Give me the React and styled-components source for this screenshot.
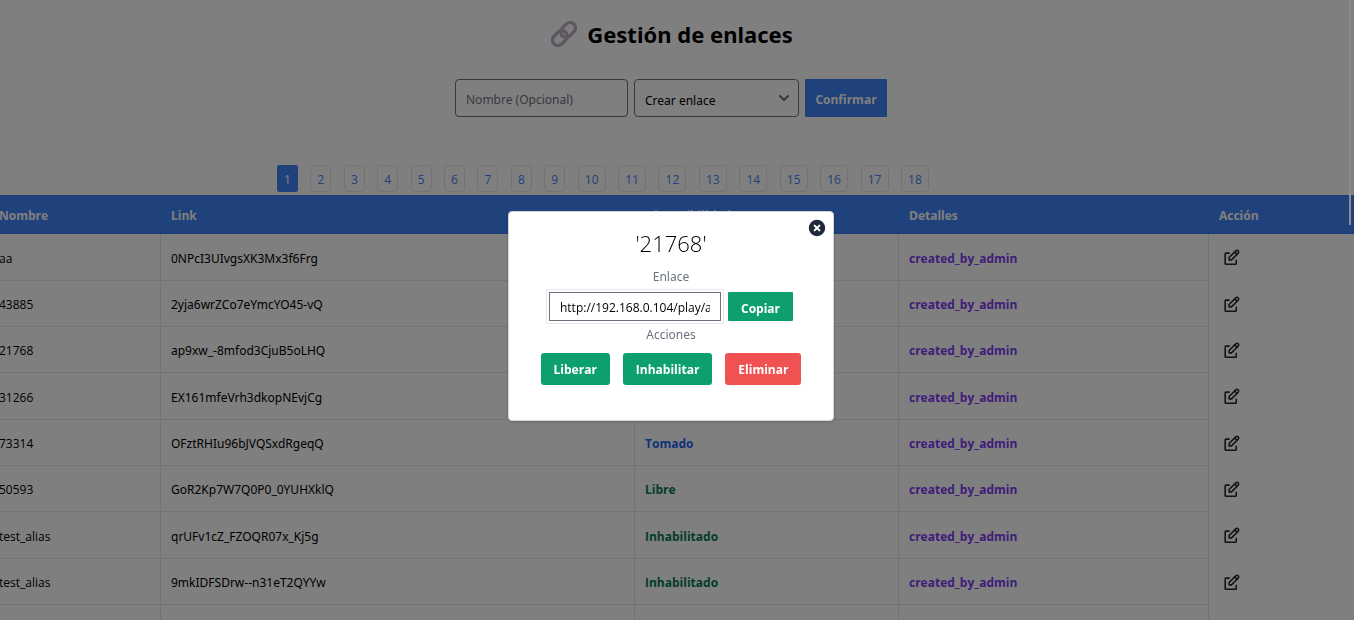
import React, { useState } from "react";
import styled, { createGlobalStyle } from "styled-components";

const GlobalStyle = createGlobalStyle`
  *, *::before, *::after { box-sizing: border-box; }
  body {
    margin: 0;
    background: #fff;
    color: #000;
    font-family: "Open Sans", "Noto Sans", sans-serif;
    font-size: 12px;
    line-height: 20px;
    overflow: hidden;
  }
  button, input, select { font: inherit; margin: 0; }
`;

const Page = styled.div`
  height: 100vh;
  overflow: hidden;
`;

const Header = styled.header`
  display: flex;
  justify-content: center;
  align-items: center;
  gap: 10px;
  padding: 16px 10px 0 0;
`;

const Title = styled.h1`
  margin: 0;
  font-family: "Noto Sans", sans-serif;
  font-size: 22px;
  font-weight: 700;
  line-height: 36px;
`;

const CreateForm = styled.form`
  display: flex;
  justify-content: center;
  gap: 6px;
  padding: 27px 12px 0 0;
`;

const NameInput = styled.input`
  width: 173px;
  height: 38px;
  padding: 2px 10px 0;
  border: 1px solid #6b7280;
  border-radius: 4px;
  background: #fff;
  font-family: "Noto Sans", sans-serif;
  &::placeholder { color: #6b7280; opacity: 1; }
`;

const SelectBox = styled.div`
  position: relative;
  width: 165px;
`;

const Select = styled.select`
  appearance: none;
  width: 100%;
  height: 38px;
  padding: 5px 30px 0 10px;
  border: 1px solid #6b7280;
  border-radius: 4px;
  background: #fff;
  color: #000;
  font-family: "Noto Sans", sans-serif;
`;

const Chevron = styled.svg`
  position: absolute;
  right: 8px;
  top: 12px;
  pointer-events: none;
`;

const Confirm = styled.button`
  width: 82px;
  height: 38px;
  padding: 4px 0 0;
  border: 0;
  border-radius: 1px;
  background: #3f83f8;
  color: #fff;
  font-weight: 700;
`;

const PagerBar = styled.div`
  display: flex;
  justify-content: center;
  padding: 48px 148px 3px 0;
`;

const Pager = styled.nav`
  display: flex;
  justify-content: space-between;
  width: 652px;
`;

const PageButton = styled.button`
  width: ${(p) => (p.$wide ? "28px" : "21px")};
  height: 27px;
  padding: 2px 0 0;
  border: 1px solid ${(p) => (p.$active ? "#3f83f8" : "#e5e7eb")};
  border-radius: ${(p) => (p.$active ? "2px" : "4px")};
  background: ${(p) => (p.$active ? "#3f83f8" : "#fff")};
  color: ${(p) => (p.$active ? "#fff" : "#3f83f8")};
`;

const TableScroll = styled.div`
  overflow: hidden;
  display: flex;
  justify-content: flex-end;
`;

const Table = styled.table`
  flex: none;
  width: calc(100% + 11px);
  table-layout: fixed;
  border-collapse: separate;
  border-spacing: 0;
  text-align: left;
`;

const Col = styled.col`
  width: ${(p) => p.$width};
`;

const HeadCell = styled.th`
  height: 39px;
  padding: 3px 10px 0;
  border-bottom: 1px solid #3b78e6;
  background: #3f83f8;
  color: #fff;
  font-weight: 700;
`;

const Row = styled.tr`
  height: 46px;
  &:nth-child(3n + 1) { height: 47px; }
`;

const tones = { plain: "#000", taken: "#1c64f2", free: "#057a55", detail: "#7e3af2" };

const Cell = styled.td`
  padding: 3px 10px 0;
  border-right: 1px solid #e5e7eb;
  border-bottom: 1px solid #e5e7eb;
  color: ${(p) => tones[p.$tone || "plain"]};
  font-weight: ${(p) => (p.$tone ? 700 : 400)};
`;

const LinkCell = styled(Cell)`
  font-family: "Noto Sans", sans-serif;
`;

const ActionCell = styled.td`
  padding: 0 13px;
`;

const IconButton = styled.button`
  display: block;
  padding: 0;
  border: 0;
  background: none;
  color: #1f2937;
  svg { display: block; }
`;

const ScrollThumb = styled.div`
  position: absolute;
  top: 0;
  right: 3px;
  width: 2px;
  height: 225px;
  background: #8c8c8c;
`;

const Overlay = styled.div`
  position: fixed;
  inset: 0;
  display: flex;
  align-items: center;
  justify-content: center;
  padding: 12px 12px 0 0;
  background: rgba(0, 0, 0, 0.5);
`;

const Dialog = styled.section`
  position: relative;
  width: 326px;
  padding: 13px 20px 35px;
  border: 1px solid #d1d5db;
  border-radius: 4px;
  background: #fff;
  box-shadow: 0 1px 3px rgba(0, 0, 0, 0.2);
  text-align: center;
`;

const CloseButton = styled.button`
  position: absolute;
  top: 7px;
  right: 7px;
  padding: 0;
  border: 0;
  background: none;
  svg { display: block; }
`;

const DialogTitle = styled.h2`
  margin: 0;
  font-size: 22px;
  font-weight: 300;
  line-height: 36px;
`;

const Label = styled.label`
  display: block;
  padding: 6px 0 2px;
  color: #6b7280;
  font-family: "Noto Sans", sans-serif;
`;

const ActionsLabel = styled.div`
  padding-top: 1px;
  color: #6b7280;
  font-family: "Noto Sans", sans-serif;
`;

const LinkRow = styled.div`
  display: flex;
  justify-content: center;
  align-items: center;
  gap: 4px;
  padding-right: 3px;
`;

const InputFrame = styled.div`
  padding: 2px;
  border: 1px solid #e5e7eb;
`;

const LinkInput = styled.input`
  display: block;
  width: 172px;
  height: 29px;
  padding: 2px 10px 0;
  border: 1px solid #6b7280;
  border-radius: 0;
  background: #fff;
  color: #000;
`;

const Actions = styled.div`
  display: flex;
  justify-content: center;
  gap: 13px;
  padding-top: 8px;
`;

const Button = styled.button`
  height: ${(p) => (p.$compact ? "29px" : "32px")};
  padding: ${(p) => (p.$compact ? "4px 13px 0" : "2px 13px 0")};
  border: 0;
  border-radius: ${(p) => (p.$compact ? "1px" : "3px")};
  background: ${(p) => (p.$danger ? "#f05252" : "#0e9f6e")};
  color: #fff;
  font-weight: 700;
`;

const links = [
  ["aa", "0NPcI3UIvgsXK3Mx3f6Frg", "Libre"],
  ["43885", "2yja6wrZCo7eYmcYO45-vQ", "Libre"],
  ["21768", "ap9xw_-8mfod3CjuB5oLHQ", "Tomado"],
  ["31266", "EX161mfeVrh3dkopNEvjCg", "Libre"],
  ["73314", "OFztRHIu96bJVQSxdRgeqQ", "Tomado"],
  ["50593", "GoR2Kp7W7Q0P0_0YUHXklQ", "Libre"],
  ["test_alias", "qrUFv1cZ_FZOQR07x_Kj5g", "Inhabilitado"],
  ["test_alias", "9mkIDFSDrw--n31eT2QYYw", "Inhabilitado"],
  ["", "", ""],
];

function LinkIcon() {
  return (
    <svg width="26" height="26" viewBox="0 0 26 26" fill="none" stroke="#bcaec4" strokeWidth="3.4" aria-hidden="true">
      <g transform="rotate(-45 13 13)">
        <rect x="-1" y="7.6" width="16.4" height="10.8" rx="5.4" />
        <rect x="10.6" y="7.6" width="16.4" height="10.8" rx="5.4" />
      </g>
    </svg>
  );
}

function EditIcon() {
  return (
    <svg
      width="19"
      height="19"
      viewBox="0 0 24 24"
      fill="none"
      stroke="currentColor"
      strokeWidth="2"
      strokeLinecap="round"
      strokeLinejoin="round"
      aria-hidden="true"
    >
      <path d="M9 6.5H5a1 1 0 0 0-1 1V19.500a1 1 0 0 0 1 1h12a1 1 0 0 0 1-1V15.500" />
      <path d="M20.385 6.585a2.1 2.1 0 0 0-2.97-2.97L9 12v3h3l8.385-8.415z" />
      <path d="M16 5l3 3" />
    </svg>
  );
}

export default function App() {
  const [page, setPage] = useState(1);
  const [open, setOpen] = useState(true);
  return (
    <>
      <GlobalStyle />
      <Page>
        <Header>
          <LinkIcon />
          <Title>Gestión de enlaces</Title>
        </Header>
        <CreateForm onSubmit={(e) => e.preventDefault()}>
          <NameInput aria-label="Nombre" placeholder="Nombre (Opcional)" />
          <SelectBox>
            <Select aria-label="Tipo">
              <option>Crear enlace</option>
            </Select>
            <Chevron width="14" height="14" viewBox="0 0 14 14" fill="none" stroke="#6b7280" strokeWidth="2">
              <path d="M3 5l4 4 4-4" strokeLinecap="round" strokeLinejoin="round" />
            </Chevron>
          </SelectBox>
          <Confirm type="submit">Confirmar</Confirm>
        </CreateForm>
        <PagerBar>
          <Pager aria-label="Páginas">
            {Array.from({ length: 18 }, (_, i) => i + 1).map((n) => (
              <PageButton key={n} type="button" $wide={n > 9} $active={n === page} onClick={() => setPage(n)}>
                {n}
              </PageButton>
            ))}
          </Pager>
        </PagerBar>
        <TableScroll>
          <Table>
            <colgroup>
              <Col $width="172px" />
              <Col $width="474px" />
              <Col $width="264px" />
              <Col $width="310px" />
              <Col $width="auto" />
            </colgroup>
            <thead>
              <tr>
                {["Nombre", "Link", "Disponibilidad", "Detalles", "Acción"].map((h) => (
                  <HeadCell key={h} scope="col">{h}</HeadCell>
                ))}
              </tr>
            </thead>
            <tbody>
              {links.map(([name, link, state], i) => (
                <Row key={i}>
                  <Cell>{name}</Cell>
                  <LinkCell>{link}</LinkCell>
                  <Cell $tone={state === "Tomado" ? "taken" : "free"}>{state}</Cell>
                  <Cell $tone="detail">{link && "created_by_admin"}</Cell>
                  <ActionCell>
                    {link && (
                      <IconButton type="button" aria-label="Editar" onClick={() => setOpen(true)}>
                        <EditIcon />
                      </IconButton>
                    )}
                  </ActionCell>
                </Row>
              ))}
            </tbody>
          </Table>
        </TableScroll>
      </Page>
      {open && (
        <Overlay>
          <Dialog role="dialog" aria-modal="true" aria-labelledby="dialog-title">
            <CloseButton type="button" aria-label="Cerrar" onClick={() => setOpen(false)}>
              <svg width="18" height="18" viewBox="0 0 18 18">
                <circle cx="9" cy="9" r="8.2" fill="#1f2937" />
                <path d="M6.600 6.600l4.800 4.800M11.400 6.600l-4.800 4.800" stroke="#fff" strokeWidth="2" strokeLinecap="round" />
              </svg>
            </CloseButton>
            <DialogTitle id="dialog-title">'21768'</DialogTitle>
            <Label htmlFor="link">Enlace</Label>
            <LinkRow>
              <InputFrame>
                <LinkInput id="link" readOnly value="http://192.168.0.104/play/ap9xw_-8mfod3CjuB5oLHQ" />
              </InputFrame>
              <Button type="button" $compact>Copiar</Button>
            </LinkRow>
            <ActionsLabel>Acciones</ActionsLabel>
            <Actions>
              <Button type="button">Liberar</Button>
              <Button type="button">Inhabilitar</Button>
              <Button type="button" $danger>Eliminar</Button>
            </Actions>
          </Dialog>
        </Overlay>
      )}
      <ScrollThumb />
    </>
  );
}
